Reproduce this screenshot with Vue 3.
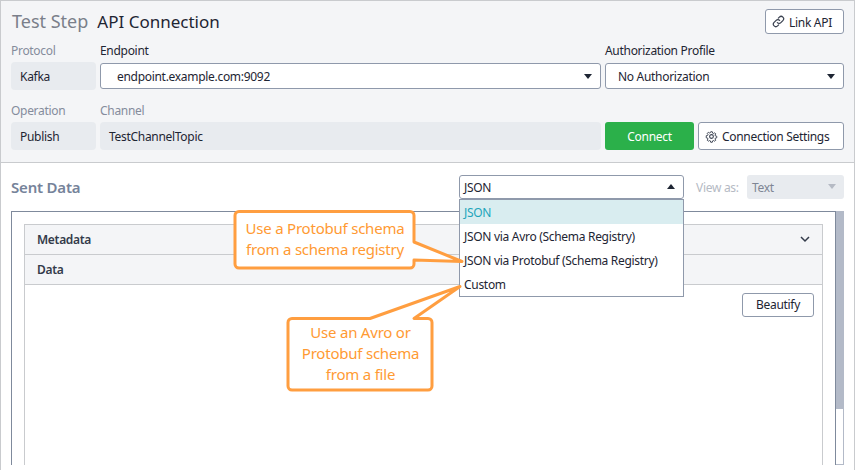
<script setup>
const items = ['JSON', 'JSON via Avro (Schema Registry)', 'JSON via Protobuf (Schema Registry)', 'Custom']
</script>

<template>
  <div class="page">
    <header class="top">
      <div class="title-row">
        <h1 class="title"><span class="muted">Test Step</span><span>API Connection</span></h1>
        <button class="btn link-btn">
          <svg width="13" height="13" viewBox="0 0 16 16" fill="none" stroke="#3a4150" stroke-width="1.5" stroke-linecap="round">
            <path d="M6.600 9.400a3 3 0 0 0 4.300 0l2.500-2.500a3 3 0 0 0-4.300-4.300L7.800 3.900" />
            <path d="M9.400 6.600a3 3 0 0 0-4.300 0L2.600 9.100a3 3 0 0 0 4.300 4.300l1.300-1.300" />
          </svg>
          <span class="txt">Link API</span>
        </button>
      </div>
      <div class="form">
        <label class="lbl muted-l">Protocol</label>
        <label class="lbl">Endpoint</label>
        <label class="lbl span2">Authorization Profile</label>
        <div class="ro">Kafka</div>
        <div class="sel endpoint">endpoint.example.com:9092<i class="caret"></i></div>
        <div class="sel auth span2">No Authorization<i class="caret"></i></div>
        <label class="lbl muted-l low">Operation</label>
        <label class="lbl muted-l low">Channel</label>
        <span class="span2"></span>
        <div class="ro">Publish</div>
        <div class="ro">TestChannelTopic</div>
        <div class="actions span2">
          <button class="connect">Connect</button>
          <button class="btn settings">
            <svg width="13" height="13" viewBox="0 0 16 16" fill="none" stroke="#3a4150" stroke-width="1.300" stroke-linejoin="round">
              <circle cx="8" cy="8" r="2.300" />
              <path d="M6.900 1.500h2.200l.4 1.900 1.200.5 1.600-1 1.500 1.500-1 1.600.5 1.200 1.900.4v2.200l-1.900.4-.5 1.200 1 1.600-1.500 1.500-1.600-1-1.200.5-.4 1.900H6.900l-.4-1.900-1.200-.5-1.600 1-1.500-1.500 1-1.600-.5-1.200-1.900-.4V6.900l1.900-.4.5-1.200-1-1.600 1.500-1.500 1.600 1 1.200-.5z" transform="translate(0.8 0.8) scale(0.9)" />
            </svg>
            <span class="txt">Connection Settings</span>
          </button>
        </div>
      </div>
    </header>

    <section class="sent">
      <div class="sent-head">
        <h2 class="sent-title">Sent Data</h2>
        <div class="format">
          <div class="sel open">JSON<i class="caret up"></i></div>
          <ul class="menu">
            <li v-for="(item, i) in items" :key="item" :class="{ active: i === 0 }">{{ item }}</li>
          </ul>
        </div>
        <span class="view-as">View as:</span>
        <div class="sel disabled">Text<i class="caret"></i></div>
      </div>

      <div class="work">
        <div class="box">
          <div class="panel">
            <div class="bar"><b>Metadata</b>
              <svg width="10" height="7" viewBox="0 0 10 7" fill="none" stroke="#333b4a" stroke-width="1.5"><path d="M1 1l4 4 4-4" /></svg>
            </div>
            <div class="bar"><b>Data</b></div>
            <div class="body">
              <button class="btn beautify">Beautify</button>
            </div>
          </div>
        </div>
        <div class="scroll"><div class="thumb"></div></div>
      </div>

      <svg class="callouts" width="855" height="470" viewBox="0 0 855 470">
        <g fill="#fff" stroke="#ff9e40" stroke-width="3" stroke-linejoin="round">
          <path d="M239 210.500H410a4 4 0 0 1 4 4V241L462 260.500L414 259V263a4 4 0 0 1-4 4H239a4 4 0 0 1-4-4V214.500a4 4 0 0 1 4-4z" />
          <path d="M292 317.500H370L460 285.500L414 317.500H428a4 4 0 0 1 4 4V385a4 4 0 0 1-4 4H292a4 4 0 0 1-4-4V321.500a4 4 0 0 1 4-4z" />
        </g>
      </svg>
      <div class="note note-a">Use a Protobuf schema<br />from a schema registry</div>
      <div class="note note-b">Use an Avro or<br />Protobuf schema<br />from a file</div>
    </section>
  </div>
</template>

<style>
html, body { margin: 0; background: #fff; }
</style>

<style scoped>
* { box-sizing: border-box; }
.page {
  width: 855px; height: 470px; overflow: hidden; position: relative;
  font: 12px/16px "Noto Sans", sans-serif; letter-spacing: -0.3px; color: #1e2533;
  border-left: 1px solid #c9cbce; border-right: 1px solid #c9cbce;
}
.top {
  height: 163px; background: #f4f5f7; padding: 8px 10px 0 10px;
  border-top: 1px solid #c9cbce; border-bottom: 1px solid #c9cbce;
}
.title-row { display: flex; justify-content: space-between; height: 25px; }
.title {
  margin: 0; font-size: 17px; line-height: 25px; font-weight: 400; letter-spacing: 0;
  display: flex; gap: 9px; color: #1e2533; padding-left: 1px;
}
.muted { color: #7a7f8a; font-size: 18px; }
.btn {
  font: inherit; letter-spacing: inherit; color: #1e2533; background: #fff; border: 1px solid #8f99ab; border-radius: 3px;
  display: flex; align-items: center; gap: 4px; padding: 0 0 0 6px;
}
.txt { position: relative; top: 1px; }
.link-btn { width: 79px; height: 25px; }
.form {
  display: grid; margin-top: 8px;
  grid-template-columns: 85px 501px 89px 146px; column-gap: 4px;
  grid-template-rows: 20px 28px 32px 28px;
}
.lbl { line-height: 18px; }
.muted-l { color: #858c9c; }
.low { align-self: end; padding-bottom: 2px; }
.span2 { grid-column: span 2; }
.ro { background: #e8ebef; border-radius: 4px; padding-left: 9px; line-height: 30px; height: 28px; }
.sel {
  position: relative; background: #fff; border: 1px solid #8f99ab; border-radius: 3px;
  line-height: 26px; padding-left: 12px;
}
.endpoint { padding-left: 16px; height: 26px; margin-top: 1px; }
.auth { height: 26px; margin-top: 1px; }
.caret {
  position: absolute; right: 8px; top: 10px; width: 0; height: 0;
  border-left: 4px solid transparent; border-right: 4px solid transparent; border-top: 5px solid #1e2533;
}
.caret.up { border-top: 0; border-bottom: 5px solid #1e2533; }
.actions { display: flex; gap: 4px; }
.connect {
  width: 89px; height: 28px; font: inherit; line-height: 30px; letter-spacing: inherit; color: #fff; background: #2bb04a; border: 0; border-radius: 3px; padding: 0;
}
.settings { width: 146px; height: 28px; }
.beautify { justify-content: center; padding: 0; }
.sent { position: relative; height: 306px; }
.sent-head { display: flex; align-items: flex-start; padding: 12px 10px 0; height: 48px; }
.sent-title { margin: 0; width: 448px; font-size: 15px; line-height: 24px; font-weight: 600; letter-spacing: -0.2px; color: #76839a; }
.format { width: 225px; position: relative; }
.format .sel { height: 24px; padding-left: 4px; line-height: 24px; }
.format .caret { top: 8px; }
.menu {
  position: absolute; z-index: 3; left: 0; right: 0; top: 24px; margin: 0; padding: 0; list-style: none;
  height: 98px; background: #fff; border: 1px solid #8f99ab;
}
.menu li { height: 24px; line-height: 26px; padding-left: 4px; }
.menu .active { background: #d9edf0; color: #1ea5bb; }
.view-as { margin-left: 12px; width: 51px; line-height: 26px; color: #b5bac4; }
.disabled { width: 97px; height: 24px; background: #e8ebef; border: 0; color: #7e8594; padding-left: 5px; line-height: 26px; }
.disabled .caret { border-top-color: #b5bac4; top: 9px; }
.work { display: flex; height: 254px; margin: 0 10px; }
.box { width: 825px; border: 1px solid #7f8a9c; border-bottom: 0; padding: 12px 12px 0; }
.panel { height: 241px; border: 1px solid #c9cbce; border-bottom: 0; }
.bar {
  height: 30px; background: #f4f5f7; border-bottom: 1px solid #c9cbce; padding: 0 12px;
  display: flex; align-items: center; justify-content: space-between; color: #333b4a;
}
.bar b { font-weight: 600; }
.body { padding: 8px; display: flex; justify-content: flex-end; }
.beautify { width: 72px; height: 24px; }
.scroll { width: 8px; border: 1px solid #b3bac8; border-left: 0; height: 254px; background: #fff; }
.thumb { height: 198px; background: #b3bac8; margin: -1px -1px 0 0; }
.callouts { position: absolute; left: -1px; top: -162px; z-index: 4; pointer-events: none; }
.note { position: absolute; z-index: 5; color: #ff9a33; font-size: 15px; letter-spacing: -0.22px; line-height: 21px; text-align: center; }
.note-a { left: 234px; top: 55px; width: 180px; }
.note-b { left: 287px; top: 159px; width: 145px; }
</style>
